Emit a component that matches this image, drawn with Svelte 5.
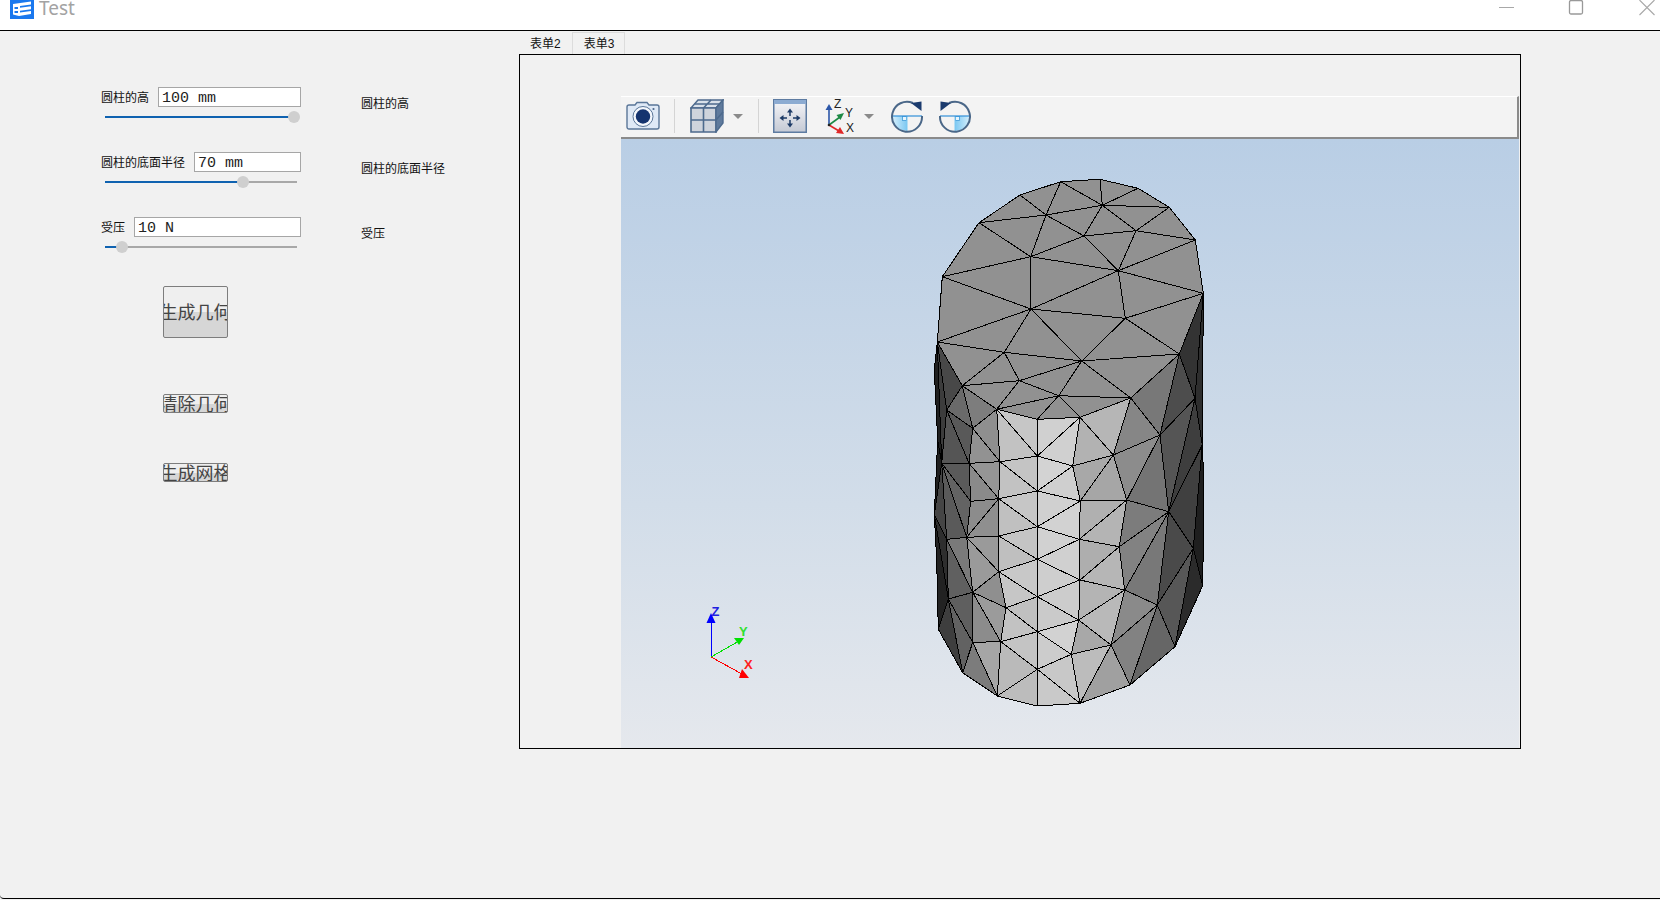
<script>
  const groups = [
    { label: '圆柱的高', value: '100 mm', pct: 98.5 },
    { label: '圆柱的底面半径', value: '70 mm', pct: 72 },
    { label: '受压', value: '10 N', pct: 9 }
  ];
  const buttons = [
    { text: '生成几何', cls: 'b1' },
    { text: '清除几何', cls: 'b2' },
    { text: '生成网格', cls: 'b3' }
  ];

  const z4 = (x, y) => [900 + x / 3, 160 + y / 3];
  const z5 = (x, y) => [900 + x / 3, 420 + y / 3];
  const V = {
    a1: z4(127,350), a2: z4(237,188), a3: z4(360,105), a4: z4(482,65), a5: z4(600,58), a6: z4(714,85),
    a7: z4(808,142), a8: z4(886,240), a9: z4(910,400), a10: z4(838,582), a11: z4(692,714), a12: z4(540,772),
    a13: z4(412,778), a14: z4(290,748), a15: z4(187,677), a16: z4(112,546),
    b1: z4(438,165), b2: z4(607,136), b3: z4(552,228), b4: z4(708,212), b5: z4(392,290), b6: z4(655,332),
    b7: z4(393,447), b8: z4(676,475), b9: z4(545,603), b10: z4(313,577), b11: z4(358,662), b12: z4(476,707),
    c1: z5(412,108), c2: z5(412,213), c3: z5(412,320), c4: z5(412,418), c5: z5(412,530), c6: z5(412,635), c7: z5(412,748), c8: z5(412,858),
    d1: z5(518,138), d2: z5(541,243), d3: z5(538,358), d4: z5(540,480), d5: z5(536,600), d6: z5(514,703), d7: z5(540,850),
    l1: z5(300,125), l2: z5(296,236), l3: z5(296,348), l4: z5(296,455), l5: z5(318,563), l6: z5(302,665), l7: z5(292,828),
    e1: z5(640,105), e2: z5(680,240), e3: z5(658,380), e4: z5(674,510), e5: z5(633,675), e6: z5(690,795),
    f0: z5(780,45), f1: z5(806,275), f2: z5(772,555), f3: z5(825,680), g: z5(880,385), h: z4(885,715),
    r0: z5(912,200), r1: z5(907,75), r3: z5(908,497),
    p: z4(140,750), q: z5(218,25), q2: z5(207,130), q3: z5(212,244), q4: z5(200,352), q5: z5(218,517), q6: z5(218,667), bt: z5(188,758),
    s1: z5(125,130), s2: z5(103,285), s3: z5(140,358), s4: z5(145,537), s5: z5(115,628), s6: z5(110,420),
    o1: z4(103,630), o2: z5(113,60)
  };

  const top = 'a2 a3 b1,a3 a4 b1,a4 b2 b1,a4 a5 b2,a5 a6 b2,a6 a7 b2,a7 b4 b2,a7 a8 b4,b2 b4 b3,b1 b2 b3,a2 b1 b5,b1 b3 b5,b3 b6 b5,b3 b4 b6,b4 a8 b6,a8 a9 b6,b6 a9 b8,a9 a10 b8,b8 a10 b9,a10 a11 b9,b9 a11 b12,a11 a12 b12,a12 a13 b12,a14 a13 b12,a14 b11 b12,a15 a14 b11,a15 b11 b10,a16 a15 b10,a16 b10 b7,b10 b9 b7,b10 b11 b9,b11 b12 b9,b7 b9 b8,b7 b8 b6,b7 b6 b5,a1 b7 b5,a1 b5 a2,a1 a16 b7';

  const shaded = [
    ['a14 c1 a13','c6'],['a13 a12 c1','d0'],['a12 d1 c1','d0'],['a14 c1 l1','c2'],
    ['c1 l1 c2','c4'],['c1 d1 c2','d3'],['l1 l2 c2','c2'],['d1 d2 c2','cf'],['c2 l2 c3','c6'],['c2 d2 c3','d0'],
    ['l2 l3 c3','c0'],['d2 d3 c3','d2'],['c3 l3 c4','c4'],['c3 d3 c4','d1'],['l3 l4 c4','bf'],['d3 d4 c4','d0'],
    ['c4 l4 c5','c8'],['c4 d4 c5','ce'],['l4 l5 c5','c6'],['d4 d5 c5','cc'],['c5 l5 c6','c0'],['c5 d5 c6','ca'],
    ['l5 l6 c6','c2'],['d5 d6 c6','d2'],['c6 l6 c7','c4'],['c6 d6 c7','cc'],['l6 l7 c7','ba'],['d6 d7 c7','c8'],
    ['c7 l7 c8','bc'],['c7 d7 c8','c9'],
    ['a12 a11 e1','b6'],['a12 e1 d1','b2'],['d1 e1 d2','a8'],['d2 e1 e2','a6'],['d2 e2 d3','b0'],['d3 e2 e3','b4'],
    ['d3 e3 d4','ae'],['d4 e3 e4','b6'],['d4 e4 d5','b4'],['d5 e4 e5','b9'],['d5 e5 d6','a8'],['d6 e5 d7','bc'],['d7 e5 e6','a0'],
    ['a11 e1 f0','86'],['e1 f0 e2','8c'],['a11 a10 f0','78'],['a10 h f0','4d'],['a9 a10 h','33'],['f0 h f1','55'],['h r1 f1','3e'],['h a9 r1','2e'],
    ['f0 f1 e2','74'],['e2 f1 e3','7c'],['e3 f1 e4','82'],['f1 e4 f2','78'],['e4 f2 e5','8a'],['e5 f2 e6','82'],['e6 f2 f3','66'],
    ['f2 g f1','4a'],['f2 g f3','57'],['g r3 f3','2b'],['f1 r1 g','40'],['g r1 r0 r3','1f'],
    ['a14 q l1','8f'],['a14 a15 q','7d'],['a15 p q','6a'],['p q2 q','59'],['q q2 l1','92'],['a16 a15 p','48'],['a16 p s1','3c'],
    ['p q2 s1','55'],['s1 q2 q3','5a'],['q2 l2 q3','8a'],['l1 q2 l2','95'],['s1 q3 q4','63'],['q3 l2 q4','8c'],['l2 l3 q4','8f'],
    ['q4 l3 l4','9a'],['s1 q4 s3','5a'],['s1 s3 s2','45'],['s2 s3 s4','2e'],['s3 q4 q5','7a'],['q4 l4 q5','9a'],['l4 l5 q5','8f'],
    ['s3 s4 q5','60'],['s4 q5 q6','5f'],['q5 l5 l6','9b'],['q5 q6 l6','8c'],['q6 l6 l7','a6'],['q6 bt l7','7c'],['s4 q6 bt','62'],
    ['s4 bt s5','3e'],['s2 s6 s5 s4','22'],['a16 o1 o2 s1','1f'],['o2 s2 s1','1f']
  ];

  const pts = (names) => names.split(' ').map((n) => V[n].map((v) => v.toFixed(1)).join(',')).join(' ');
  const faces = [
    ...top.split(',').map((t) => ({ points: pts(t), fill: '#919191' })),
    ...shaded.map(([t, s]) => ({ points: pts(t), fill: `#${s}${s}${s}` }))
  ];
</script>

<div class="window">
  <header class="title">
    <svg class="logo" viewBox="0 0 24 24" aria-hidden="true">
      <rect width="24" height="24" fill="#1a78ee" />
      <path d="M3 9 L21 6.5 V9.5 L10 11 V12.8 L21 11.3 V14.3 L10 15.8 V17.6 L21 16.1 V19 L9 21 L3 19.5 Z" fill="#fff" />
      <path d="M4.5 12 H8 V14 H4.5 Z M4.5 16 H8 V18 H4.5 Z" fill="#1a78ee" />
    </svg>
    <span class="app-name">Test</span>
    <div class="controls">
      <svg class="c-min" width="16" height="16" viewBox="0 0 16 16"><path d="M0 7.5H15" stroke="#a8a8a8" /></svg>
      <svg class="c-max" width="16" height="16" viewBox="0 0 16 16"><rect x="1.5" y="0.5" width="13" height="13.5" rx="1.5" fill="none" stroke="#999" stroke-width="1.3" /></svg>
      <svg class="c-close" width="16" height="16" viewBox="0 0 16 16"><path d="M0.5 0L15.5 15M15.5 0L0.5 15" stroke="#a8a8a8" stroke-width="1.1" /></svg>
    </div>
  </header>

  <main class="main">
    <section class="side">
      {#each groups as g}
        <div class="group">
          <div class="fields">
            <div class="field">
              <span class="label">{g.label}</span>
              <input class="input" readonly value={g.value} />
            </div>
            <div class="track">
              <div class="fill" style:width="{g.pct}%"></div>
              <div class="thumb" style:left="{g.pct}%"></div>
            </div>
          </div>
          <span class="label echo">{g.label}</span>
        </div>
      {/each}
      <div class="buttons">
        {#each buttons as b}
          <button class="btn {b.cls}">{b.text}</button>
        {/each}
      </div>
    </section>

    <section class="work">
      <nav class="tabs">
        <span class="tab first">表单2</span>
        <span class="tab active">表单3</span>
      </nav>
      <div class="frame">
        <div class="viewer">
          <div class="toolbar">
            <svg class="i-cam" width="34" height="30" viewBox="0 0 34 30">
              <path d="M3 4 H9 L11 1.5 H21 L23 4 H31 A2 2 0 0 1 33 6 V26 A2 2 0 0 1 31 28 H3 A2 2 0 0 1 1 26 V6 A2 2 0 0 1 3 4 Z" fill="#dfe9f6" stroke="#5a7698" stroke-width="1.4" />
              <circle cx="17" cy="15.5" r="10" fill="#f4f7fc" stroke="#5a7698" />
              <circle cx="17" cy="15.5" r="7.2" fill="#15346f" />
              <circle cx="27.5" cy="8" r="1.1" fill="#4c678a" />
            </svg>
            <span class="sep s1"></span>
            <svg class="i-cube" width="34" height="34" viewBox="0 0 34 34">
              <path d="M1 9 L8 1 H33 L26 9 Z" fill="#d9e1ea" stroke="#4d6a8d" stroke-width="1.4" />
              <path d="M1 9 H26 V33 H1 Z" fill="#cfd4dc" stroke="#4d6a8d" stroke-width="1.6" />
              <path d="M26 9 L33 1 V24 L26 33 Z" fill="#5f7a9c" stroke="#4d6a8d" stroke-width="1.4" />
              <path d="M13.5 9 V33 M1 21 H26 M13.5 9 L21 1 M4.5 5 H29.5 M26 21 L33 13" fill="none" stroke="#4d6a8d" stroke-width="1.6" />
            </svg>
            <svg class="i-drop d1" width="10" height="5" viewBox="0 0 10 5"><path d="M0 0H10L5 5Z" fill="#8a8a8a" /></svg>
            <span class="sep s2"></span>
            <svg class="i-fit" width="34" height="34" viewBox="0 0 34 34">
              <defs><linearGradient id="fitg" x1="0" y1="0" x2="0" y2="1"><stop offset="0" stop-color="#f6f6f9" /><stop offset="1" stop-color="#c4c9d4" /></linearGradient></defs>
              <rect x="0.75" y="0.75" width="32.5" height="32.5" fill="url(#fitg)" stroke="#5d7ba1" stroke-width="1.5" />
              <rect x="1" y="1" width="32" height="4" fill="#8cabd2" />
              <g fill="none" stroke="#1d3a66" stroke-width="1.5">
                <path d="M17 13 V17 M17 21 V25 M10 19 H14 M20 19 H24" />
              </g>
              <g fill="#1d3a66">
                <path d="M17 9.5 L14 13.5 H20 Z M17 28.5 L14 24.5 H20 Z M6.5 19 L10.5 16 V22 Z M27.5 19 L23.5 16 V22 Z" />
              </g>
            </svg>
            <svg class="i-triad" width="30" height="36" viewBox="0 0 30 36">
              <path d="M4 27 V10" stroke="#2b56a8" stroke-width="1.6" />
              <path d="M4 6 L0.5 12 H7.5 Z" fill="#2b56a8" />
              <path d="M4 27 L15 19" stroke="#1d8a45" stroke-width="1.6" />
              <path d="M19 15 L11.5 17 L15.5 22 Z" fill="#1d8a45" />
              <path d="M4 27 L14 33" stroke="#e02828" stroke-width="1.6" />
              <path d="M19 36 L11 35 L15 29 Z" fill="#e02828" />
              <circle cx="4" cy="27" r="1.3" fill="#222" />
              <text class="tx" x="9" y="10">Z</text>
              <text class="tx" x="20" y="18.5">Y</text>
              <text class="tx" x="21" y="34">X</text>
            </svg>
            <svg class="i-drop d2" width="10" height="5" viewBox="0 0 10 5"><path d="M0 0H10L5 5Z" fill="#8a8a8a" /></svg>
            <svg class="i-rot r1" width="34" height="34" viewBox="0 0 34 34">
              <defs>
                <linearGradient id="rotl" x1="0" y1="0" x2="1" y2="0"><stop offset="0" stop-color="#d8f0fc" /><stop offset="1" stop-color="#7cc8f2" /></linearGradient>
                <linearGradient id="rotr" x1="1" y1="0" x2="0" y2="0"><stop offset="0" stop-color="#d8f0fc" /><stop offset="1" stop-color="#7cc8f2" /></linearGradient>
              </defs>
              <path d="M2 17 H17 V32 A15 15 0 0 1 2 17 Z" fill="url(#rotl)" />
              <rect x="12.5" y="17.5" width="4" height="4" fill="#e6f5fd" stroke="#3d9ad8" stroke-width="0.8" />
              <path d="M17 17 V32" stroke="#7cc8f2" stroke-width="1" />
              <path d="M2 17 H32" stroke="#2f8fd8" stroke-width="1.2" />
              <path d="M23 4 A15 15 0 1 0 32 17" fill="none" stroke="#4a6788" stroke-width="2" />
              <path d="M21 4 L31.5 2.5 V12 Z" fill="#1b3b6e" />
            </svg>
            <svg class="i-rot r2" width="34" height="34" viewBox="0 0 34 34">
              <path d="M32 17 H17 V32 A15 15 0 0 0 32 17 Z" fill="url(#rotr)" />
              <rect x="17.5" y="17.5" width="4" height="4" fill="#e6f5fd" stroke="#3d9ad8" stroke-width="0.8" />
              <path d="M17 17 V32" stroke="#7cc8f2" stroke-width="1" />
              <path d="M2 17 H32" stroke="#2f8fd8" stroke-width="1.2" />
              <path d="M11 4 A15 15 0 1 1 2 17" fill="none" stroke="#4a6788" stroke-width="2" />
              <path d="M13 4 L2.5 2.5 V12 Z" fill="#1b3b6e" />
            </svg>
          </div>
          <div class="view">
            <svg class="scene" width="898" height="609" viewBox="621 139 898 609">
              <g stroke="#000" stroke-width="1" stroke-linejoin="round" shape-rendering="crispEdges">
                {#each faces as f}
                  <polygon points={f.points} fill={f.fill} />
                {/each}
              </g>
              <g shape-rendering="crispEdges">
                <path d="M711 657 V620" stroke="#0000ff" fill="none" />
                <path d="M711 657 L739 641" stroke="#00e000" fill="none" />
                <path d="M711 657 L742 674" stroke="#ff0000" fill="none" />
              </g>
              <path d="M711 613 L715.5 623 H706.5 Z" fill="#0000ff" />
              <path d="M734 638 H744 L739 645 Z" fill="#00e000" />
              <path d="M742 669 L749 678 H739 Z" fill="#ff0000" />
              <text class="ax" x="711.5" y="616" fill="#2020e0">Z</text>
              <text class="ax" x="739" y="636" fill="#30e030">Y</text>
              <text class="ax" x="744" y="669" fill="#ff2020">X</text>
            </svg>
          </div>
        </div>
      </div>
    </section>
  </main>
</div>

<style>
  :global(body) {
    margin: 0;
    background: #f1f1f1;
  }
  .window {
    width: 1660px;
    height: 899px;
    display: flex;
    flex-direction: column;
    border-bottom: 1px solid #000;
    border-bottom-left-radius: 4px;
    box-sizing: border-box;
    overflow: hidden;
    font-family: "Liberation Sans", "Noto Sans CJK SC", sans-serif;
  }
  .title {
    flex: none;
    height: 31px;
    box-sizing: border-box;
    background: #fff;
    border-bottom: 1px solid #000;
    padding: 0 5px 11px 10px;
    display: flex;
    align-items: flex-end;
    overflow: hidden;
  }
  .logo {
    width: 24px;
    height: 24px;
    flex: none;
  }
  .app-name {
    margin-left: 5px;
    margin-bottom: -1px;
    font: 19px/24px "Noto Sans", sans-serif;
    color: #a3a3a3;
  }
  .controls {
    margin-left: auto;
    align-self: flex-start;
    display: flex;
  }
  .c-max {
    margin-left: 53px;
  }
  .c-close {
    margin-left: 55px;
  }
  .main {
    flex: 1;
    display: flex;
    min-height: 0;
  }
  .side {
    width: 519px;
    flex: none;
    box-sizing: border-box;
    padding: 56px 0 0 101px;
  }
  .group {
    display: flex;
    margin-bottom: 34px;
  }
  .fields {
    width: 200px;
    flex: none;
  }
  .field {
    height: 20px;
    display: flex;
    align-items: center;
    gap: 9px;
  }
  .label {
    font-size: 12px;
    line-height: 20px;
    color: #111;
    white-space: nowrap;
  }
  .field .label {
    line-height: 18px;
    padding-top: 2px;
  }
  .echo {
    margin: 7px 0 0 60px;
  }
  .input {
    flex: 1;
    min-width: 0;
    height: 20px;
    box-sizing: border-box;
    border: 1px solid #a6a6a6;
    outline: none;
    background: #fff;
    padding: 2px 3px 0;
    font: 15px/17px "Liberation Mono", monospace;
    color: #222;
  }
  .track {
    position: relative;
    width: 192px;
    height: 2px;
    margin: 9px 0 0 4px;
    background: #a8a8a8;
  }
  .fill {
    height: 100%;
    background: #0f62b0;
  }
  .thumb {
    position: absolute;
    top: -5px;
    width: 12px;
    height: 12px;
    margin-left: -6px;
    border-radius: 50%;
    background: #cfcfcf;
  }
  .buttons {
    margin: 38px 0 0 62px;
    display: flex;
    flex-direction: column;
    align-items: flex-start;
  }
  .btn {
    width: 65px;
    box-sizing: border-box;
    padding: 0 0 2px;
    border: 1px solid #7d7d7d;
    border-radius: 2px;
    background: linear-gradient(#efefef 50%, #d6d6d6 50%);
    display: flex;
    align-items: center;
    justify-content: center;
    overflow: hidden;
    white-space: nowrap;
    font: 18px/18px "Noto Sans CJK SC", sans-serif;
    color: #444;
  }
  .b1 {
    height: 52px;
  }
  .b2 {
    height: 19px;
    margin-top: 56px;
  }
  .b3 {
    height: 19px;
    margin-top: 50px;
  }
  .work {
    flex: none;
    width: 1002px;
    display: flex;
    flex-direction: column;
  }
  .tabs {
    height: 23px;
    display: flex;
    align-items: flex-end;
    padding-left: 1px;
  }
  .tab {
    box-sizing: border-box;
    height: 22px;
    padding: 0 10px 0 11px;
    font-size: 12px;
    line-height: 23px;
    color: #111;
    border: 1px solid transparent;
    border-bottom: none;
  }
  .tab.first {
    padding-left: 9px;
  }
  .tab.active {
    border-color: #dcdcdc;
  }
  .frame {
    height: 695px;
    box-sizing: border-box;
    border: 1px solid #000;
    padding: 41px 1px 0 101px;
    background: #f1f1f1;
  }
  .viewer {
    height: 652px;
    display: flex;
    flex-direction: column;
  }
  .toolbar {
    flex: none;
    height: 43px;
    box-sizing: border-box;
    border-top: 1px solid #fff;
    border-right: 2px solid #8a8a8a;
    border-bottom: 2px solid #8a8a8a;
    padding-bottom: 2px;
    background: #f3f3f3;
    display: flex;
    align-items: center;
  }
  .i-cam {
    margin-left: 5px;
  }
  .sep {
    width: 1px;
    height: 34px;
    background: #d4d4d4;
  }
  .sep.s1 {
    margin-left: 14px;
  }
  .i-cube {
    margin-left: 15px;
  }
  .d1 {
    margin-left: 9px;
  }
  .sep.s2 {
    margin-left: 15px;
  }
  .i-fit {
    margin-left: 14px;
  }
  .i-triad {
    margin-left: 18px;
  }
  .d2 {
    margin-left: 9px;
  }
  .r1 {
    margin-left: 16px;
  }
  .r2 {
    margin-left: 14px;
  }
  .tx {
    font: 12px "Liberation Sans", sans-serif;
    fill: #222;
  }
  .view {
    flex: 1;
    background: linear-gradient(#b9cee5, #d2dde9 60%, #e5e8ed);
  }
  .scene {
    display: block;
  }
  .ax {
    font: bold 13px "Liberation Sans", sans-serif;
  }
</style>
